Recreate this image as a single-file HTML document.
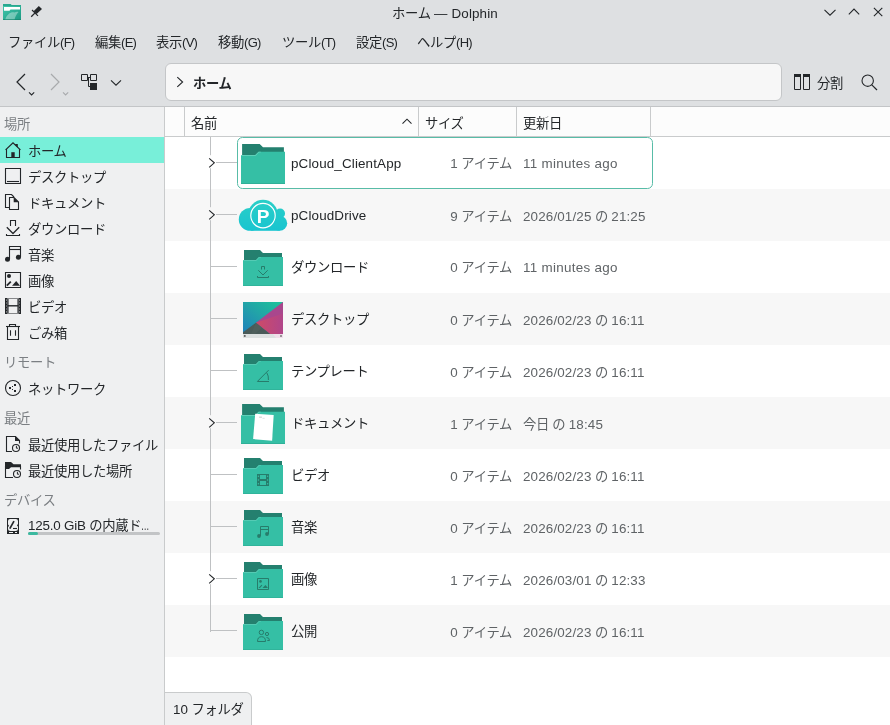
<!DOCTYPE html>
<html lang="ja">
<head>
<meta charset="utf-8">
<title>ホーム — Dolphin</title>
<style>
*{box-sizing:border-box;margin:0;padding:0}
html,body{width:890px;height:725px;overflow:hidden;background:#dee0e2}
body{position:relative;font-family:"Liberation Sans","Noto Sans CJK JP",sans-serif;font-size:13.33px;letter-spacing:-.33px;color:#232629;line-height:1}
.abs{position:absolute}
.l{font-size:13.4px;letter-spacing:.15px}
.m{letter-spacing:.3px}
.g{letter-spacing:-.2px}
.a{letter-spacing:-.7px;font-size:13px}
.el{display:inline-block;transform:scaleX(.62);transform-origin:0 50%}
.t{will-change:transform;position:absolute;white-space:nowrap;line-height:20px;height:20px;margin-top:2px}
svg{position:absolute;overflow:visible}
.gs{will-change:transform}
#titlebar{left:0;top:0;width:890px;height:27px;background:#dee0e2}
#title{left:0;width:890px;top:3px;text-align:center;margin-top:1px}
#menubar{left:0;top:27px;width:890px;height:31px}
#menubar .t{top:5px;margin-top:1px}
#toolbar{left:0;top:58px;width:890px;height:48px}
#tbsep{left:0;top:106px;width:890px;height:1px;background:#c3c5c7}
#loc{left:165px;top:63px;width:617px;height:38px;background:#f7f7f7;border:1px solid #c4c6c8;border-radius:6px}
#sidebar{left:0;top:107px;width:164px;height:618px;background:#eff0f1}
#sidediv{left:164px;top:107px;width:1px;height:618px;background:#c9cbcc}
#view{left:165px;top:107px;width:725px;height:618px;background:#fff}
.sh{left:4px;color:#7b7f83}
.si{left:28px}
#hl{left:0;top:137px;width:164px;height:26px;background:#78efd9}
#header{left:165px;top:107px;width:725px;height:30px;background:#fcfcfc;border-bottom:1px solid #c9cbcc}
.hd{top:107px;width:1px;height:29px;background:#c9cbcc}
.row{left:165px;width:725px;height:52px}
.alt{background:#f7f7f7}
.nm{left:291px;margin-top:1px}
.sz{margin-top:1px;left:400px;width:112px;text-align:right;color:#5f6366}
.dt{margin-top:1px;left:523px;color:#5f6366}
#status{left:165px;top:692px;width:87px;height:40px;background:#eff0f1;border:1px solid #c9cbcc;border-left:none;border-radius:0 6px 0 0}
</style>
</head>
<body>
<div id="titlebar" class="abs"></div>
<div id="title" class="t">ホーム <span class="l">— Dolphin</span></div>

<div id="menubar" class="abs">
<div class="t" style="left:8px">ファイル<span class="l a">(F)</span></div>
<div class="t" style="left:95px">編集<span class="l a">(E)</span></div>
<div class="t" style="left:156px">表示<span class="l a">(V)</span></div>
<div class="t" style="left:218px">移動<span class="l a">(G)</span></div>
<div class="t" style="left:282px">ツール<span class="l a">(T)</span></div>
<div class="t" style="left:356px">設定<span class="l a">(S)</span></div>
<div class="t" style="left:417px">ヘルプ<span class="l a">(H)</span></div>
</div>

<div id="toolbar" class="abs"></div>
<div id="loc" class="abs"></div>
<div class="t" style="left:193px;top:72px;font-weight:bold">ホーム</div>
<div class="t" style="left:817px;top:72px">分割</div>
<div id="tbsep" class="abs"></div>

<div id="sidebar" class="abs"></div>
<div id="sidediv" class="abs"></div>
<div id="hl" class="abs"></div>
<div class="t sh" style="top:113px">場所</div>
<div class="t si" style="top:140px">ホーム</div>
<div class="t si" style="top:166px">デスクトップ</div>
<div class="t si" style="top:192px">ドキュメント</div>
<div class="t si" style="top:218px">ダウンロード</div>
<div class="t si" style="top:244px">音楽</div>
<div class="t si" style="top:270px">画像</div>
<div class="t si" style="top:296px">ビデオ</div>
<div class="t si" style="top:322px">ごみ箱</div>
<div class="t sh" style="top:351px">リモート</div>
<div class="t si" style="top:378px">ネットワーク</div>
<div class="t sh" style="top:407px">最近</div>
<div class="t si" style="top:434px">最近使用したファイル</div>
<div class="t si" style="top:460px">最近使用した場所</div>
<div class="t sh" style="top:489px">デバイス</div>
<div class="t si" style="top:514px"><span class="l g">125.0 GiB</span> の内蔵ド<span class="l el">…</span></div>

<div id="view" class="abs"></div>
<div class="row abs" style="top:137px"></div>
<div class="row abs alt" style="top:189px"></div>
<div class="row abs" style="top:241px"></div>
<div class="row abs alt" style="top:293px"></div>
<div class="row abs" style="top:345px"></div>
<div class="row abs alt" style="top:397px"></div>
<div class="row abs" style="top:449px"></div>
<div class="row abs alt" style="top:501px"></div>
<div class="row abs" style="top:553px"></div>
<div class="row abs alt" style="top:605px"></div>

<div id="header" class="abs"></div>
<div class="hd abs" style="left:184px"></div>
<div class="hd abs" style="left:418px"></div>
<div class="hd abs" style="left:516px"></div>
<div class="hd abs" style="left:650px"></div>
<div class="t" style="left:191px;top:112px">名前</div>
<div class="t" style="left:425px;top:112px">サイズ</div>
<div class="t" style="left:523px;top:112px">更新日</div>

<div class="abs" style="left:237px;top:137px;width:416px;height:52px;border:1px solid #58bca7;border-radius:5.5px;background:#fff"></div>

<div class="t nm" style="top:153px"><span class="l">pCloud_ClientApp</span></div>
<div class="t nm" style="top:205px"><span class="l">pCloudDrive</span></div>
<div class="t nm" style="top:257px">ダウンロード</div>
<div class="t nm" style="top:309px">デスクトップ</div>
<div class="t nm" style="top:361px">テンプレート</div>
<div class="t nm" style="top:413px">ドキュメント</div>
<div class="t nm" style="top:465px">ビデオ</div>
<div class="t nm" style="top:517px">音楽</div>
<div class="t nm" style="top:569px">画像</div>
<div class="t nm" style="top:621px">公開</div>

<div class="t sz" style="top:153px"><span class="l">1</span> アイテム</div>
<div class="t sz" style="top:206px"><span class="l">9</span> アイテム</div>
<div class="t sz" style="top:257px"><span class="l">0</span> アイテム</div>
<div class="t sz" style="top:310px"><span class="l">0</span> アイテム</div>
<div class="t sz" style="top:362px"><span class="l">0</span> アイテム</div>
<div class="t sz" style="top:414px"><span class="l">1</span> アイテム</div>
<div class="t sz" style="top:466px"><span class="l">0</span> アイテム</div>
<div class="t sz" style="top:518px"><span class="l">0</span> アイテム</div>
<div class="t sz" style="top:570px"><span class="l">1</span> アイテム</div>
<div class="t sz" style="top:622px"><span class="l">0</span> アイテム</div>

<div class="t dt" style="top:153px"><span class="l m">11 minutes ago</span></div>
<div class="t dt" style="top:206px"><span class="l">2026/01/25</span> の <span class="l">21:25</span></div>
<div class="t dt" style="top:257px"><span class="l m">11 minutes ago</span></div>
<div class="t dt" style="top:310px"><span class="l">2026/02/23</span> の <span class="l">16:11</span></div>
<div class="t dt" style="top:362px"><span class="l">2026/02/23</span> の <span class="l">16:11</span></div>
<div class="t dt" style="top:414px">今日 の <span class="l">18:45</span></div>
<div class="t dt" style="top:466px"><span class="l">2026/02/23</span> の <span class="l">16:11</span></div>
<div class="t dt" style="top:518px"><span class="l">2026/02/23</span> の <span class="l">16:11</span></div>
<div class="t dt" style="top:570px"><span class="l">2026/03/01</span> の <span class="l">12:33</span></div>
<div class="t dt" style="top:622px"><span class="l">2026/02/23</span> の <span class="l">16:11</span></div>

<div class="abs" style="left:210px;top:137px;width:1px;height:495px;background:#bfc1c3"></div><div class="abs" style="left:216px;top:162px;width:21px;height:1px;background:#bfc1c3"></div><svg style="left:205px;top:155px" width="12" height="15" viewBox="0 0 12 15" ><rect x="4" y="0.2" width="3" height="13" fill="#fff"/><path d="M4.2 3.3 9.3 7.85 4.2 12.4" fill="none" stroke="#232629" stroke-width="1.1" /></svg><div class="abs" style="left:216px;top:214px;width:21px;height:1px;background:#bfc1c3"></div><svg style="left:205px;top:207px" width="12" height="15" viewBox="0 0 12 15" ><rect x="4" y="0.2" width="3" height="13" fill="#f7f7f7"/><path d="M4.2 3.3 9.3 7.85 4.2 12.4" fill="none" stroke="#232629" stroke-width="1.1" /></svg><div class="abs" style="left:211px;top:266px;width:26px;height:1px;background:#bfc1c3"></div><div class="abs" style="left:211px;top:318px;width:26px;height:1px;background:#bfc1c3"></div><div class="abs" style="left:211px;top:370px;width:26px;height:1px;background:#bfc1c3"></div><div class="abs" style="left:216px;top:422px;width:21px;height:1px;background:#bfc1c3"></div><svg style="left:205px;top:415px" width="12" height="15" viewBox="0 0 12 15" ><rect x="4" y="0.2" width="3" height="13" fill="#f7f7f7"/><path d="M4.2 3.3 9.3 7.85 4.2 12.4" fill="none" stroke="#232629" stroke-width="1.1" /></svg><div class="abs" style="left:211px;top:474px;width:26px;height:1px;background:#bfc1c3"></div><div class="abs" style="left:211px;top:526px;width:26px;height:1px;background:#bfc1c3"></div><div class="abs" style="left:216px;top:578px;width:21px;height:1px;background:#bfc1c3"></div><svg style="left:205px;top:571px" width="12" height="15" viewBox="0 0 12 15" ><rect x="4" y="0.2" width="3" height="13" fill="#fff"/><path d="M4.2 3.3 9.3 7.85 4.2 12.4" fill="none" stroke="#232629" stroke-width="1.1" /></svg><div class="abs" style="left:211px;top:630px;width:26px;height:1px;background:#bfc1c3"></div>
<svg style="left:241px;top:144px" width="44" height="40" viewBox="0 0 40 36" preserveAspectRatio="none"><g><path d="M1 0H17L20 3H39V12H1z" fill="#24806f" /><path d="M0 10H13L16 7H40V36H0z" fill="#35bfa5" /><path d="M0 35.2H40V36H0z" fill="#2fb098" /><path d="M0 10H13L16 7H18V7.6H16.3L13.3 10.7H0z" fill="#5fd0b9" /></g></svg><svg style="left:243px;top:250px" width="40" height="36" viewBox="0 0 40 36" preserveAspectRatio="none"><g><path d="M1 0H17L20 3H39V12H1z" fill="#24806f" /><path d="M0 10H13L16 7H40V36H0z" fill="#35bfa5" /><path d="M0 35.2H40V36H0z" fill="#2fb098" /><path d="M0 10H13L16 7H18V7.6H16.3L13.3 10.7H0z" fill="#5fd0b9" /><path d="M18.5 19.5V16.5H21.5V19.5" fill="none" stroke="#277c6b" stroke-width="1" /><path d="M15.3 20.3 20 25 24.7 20.3" fill="none" stroke="#277c6b" stroke-width="1" /><path d="M14.5 26V27.5H25.5V26" fill="none" stroke="#277c6b" stroke-width="1" /></g></svg><svg style="left:243px;top:354px" width="40" height="36" viewBox="0 0 40 36" preserveAspectRatio="none"><g><path d="M1 0H17L20 3H39V12H1z" fill="#24806f" /><path d="M0 10H13L16 7H40V36H0z" fill="#35bfa5" /><path d="M0 35.2H40V36H0z" fill="#2fb098" /><path d="M0 10H13L16 7H18V7.6H16.3L13.3 10.7H0z" fill="#5fd0b9" /><path d="M14.3 27.5H26" fill="none" stroke="#277c6b" stroke-width="1" /><path d="M14.5 27.3 25.6 16.2" fill="none" stroke="#277c6b" stroke-width="1" /><path d="M23.8 18.8Q25.8 21.8 25.4 26" fill="none" stroke="#277c6b" stroke-width="1" /></g></svg><svg style="left:241px;top:404px" width="44" height="40" viewBox="0 0 40 36" preserveAspectRatio="none"><g><path d="M1 0H17L20 3H39V12H1z" fill="#24806f" /><path d="M0 10H13L16 7H40V36H0z" fill="#35bfa5" /><path d="M0 35.2H40V36H0z" fill="#2fb098" /><path d="M0 10H13L16 7H18V7.6H16.3L13.3 10.7H0z" fill="#5fd0b9" /><path d="M12.9 8.7 29.7 9.8 28.3 33 11 31.6z" fill="#fff" /><path d="M16.5 11.2H19V12.6H16.5z" fill="#d9dcdc" /><path d="M19.5 12.4H21.5V13.4H19.5z" fill="#e4e6e6" /></g></svg><svg style="left:243px;top:458px" width="40" height="36" viewBox="0 0 40 36" preserveAspectRatio="none"><g><path d="M1 0H17L20 3H39V12H1z" fill="#24806f" /><path d="M0 10H13L16 7H40V36H0z" fill="#35bfa5" /><path d="M0 35.2H40V36H0z" fill="#2fb098" /><path d="M0 10H13L16 7H18V7.6H16.3L13.3 10.7H0z" fill="#5fd0b9" /><path d="M14 16H26V28H14z" fill="#277c6b" /><path d="M17 17H23V21H17zM17 23H23V27H17z" fill="#35bfa5" /><circle cx="15.4" cy="18.3" r=".7" fill="#35bfa5"/><circle cx="15.4" cy="22" r=".7" fill="#35bfa5"/><circle cx="15.4" cy="25.7" r=".7" fill="#35bfa5"/><circle cx="24.6" cy="18.3" r=".7" fill="#35bfa5"/><circle cx="24.6" cy="22" r=".7" fill="#35bfa5"/><circle cx="24.6" cy="25.7" r=".7" fill="#35bfa5"/></g></svg><svg style="left:243px;top:510px" width="40" height="36" viewBox="0 0 40 36" preserveAspectRatio="none"><g><path d="M1 0H17L20 3H39V12H1z" fill="#24806f" /><path d="M0 10H13L16 7H40V36H0z" fill="#35bfa5" /><path d="M0 35.2H40V36H0z" fill="#2fb098" /><path d="M0 10H13L16 7H18V7.6H16.3L13.3 10.7H0z" fill="#5fd0b9" /><path d="M17.5 26V16.5H25.5V24" fill="none" stroke="#277c6b" stroke-width="1" /><path d="M17.5 19.5H25.5" fill="none" stroke="#277c6b" stroke-width="1" /><circle cx="16" cy="26" r="1.9" fill="#277c6b"/><circle cx="24" cy="24" r="1.9" fill="#277c6b"/></g></svg><svg style="left:243px;top:562px" width="40" height="36" viewBox="0 0 40 36" preserveAspectRatio="none"><g><path d="M1 0H17L20 3H39V12H1z" fill="#24806f" /><path d="M0 10H13L16 7H40V36H0z" fill="#35bfa5" /><path d="M0 35.2H40V36H0z" fill="#2fb098" /><path d="M0 10H13L16 7H18V7.6H16.3L13.3 10.7H0z" fill="#5fd0b9" /><path d="M14.5 16.5H25.5V27.5H14.5z" fill="none" stroke="#277c6b" stroke-width="1" /><circle cx="17.5" cy="19.4" r="1.3" fill="#277c6b"/><path d="M15.5 26 18.5 22.8 19.3 23.6 17 26z" fill="#277c6b" /><path d="M19.5 26 22.5 23 25 26z" fill="#277c6b" /></g></svg><svg style="left:243px;top:614px" width="40" height="36" viewBox="0 0 40 36" preserveAspectRatio="none"><g><path d="M1 0H17L20 3H39V12H1z" fill="#24806f" /><path d="M0 10H13L16 7H40V36H0z" fill="#35bfa5" /><path d="M0 35.2H40V36H0z" fill="#2fb098" /><path d="M0 10H13L16 7H18V7.6H16.3L13.3 10.7H0z" fill="#5fd0b9" /><circle cx="18.4" cy="18.4" r="2.2" fill="none" stroke="#277c6b"/><path d="M14.5 27.5Q14.5 22.7 18.5 22.7T22.5 27.5z" fill="none" stroke="#277c6b" stroke-width="1" /><circle cx="24" cy="20" r="1.6" fill="none" stroke="#277c6b"/><path d="M23.5 23.5Q26.5 23.5 26.5 26.5H24.3" fill="none" stroke="#277c6b" stroke-width="1" /></g></svg><svg style="left:238px;top:199px" width="51" height="33" viewBox="-0.7 0 51 33" class="gs"><defs><linearGradient id="pcg" gradientUnits="userSpaceOnUse" x1="0" y1="0" x2="0" y2="33"><stop offset="0" stop-color="#2bcfc7"/><stop offset="1" stop-color="#18c4d0"/></linearGradient></defs><g fill="url(#pcg)"><circle cx="11.5" cy="20.4" r="11.4"/><circle cx="24.3" cy="15.6" r="14.8"/><circle cx="41.4" cy="14.4" r="4.9"/><circle cx="41" cy="24.3" r="7.5"/><rect x="12" y="20" width="29" height="11.8"/></g><circle cx="24.3" cy="16.6" r="12.2" fill="none" stroke="#fff" stroke-width="1.15"/><text x="24.3" y="23.6" text-anchor="middle" font-family="Liberation Sans,sans-serif" font-weight="bold" font-size="19" fill="#fff">P</text></svg><svg style="left:243px;top:302px" width="40" height="36" viewBox="0 0 40 36" ><defs><linearGradient id="dg1" x1="0" y1="1" x2="1" y2="0"><stop offset="0" stop-color="#1f7fbc"/><stop offset=".5" stop-color="#22a3a8"/><stop offset="1" stop-color="#1cc598"/></linearGradient><linearGradient id="dg2" x1="0" y1="0" x2="1" y2="0"><stop offset="0" stop-color="#cf4b66"/><stop offset="1" stop-color="#b0458a"/></linearGradient></defs><rect width="40" height="32" fill="url(#dg1)"/><path d="M40 0 12.9 20.8 27.1 32H40z" fill="#a9478d"/><path d="M12.9 20.8 40 11.5V32H27.1z" fill="url(#dg2)"/><path d="M0 30.3 12.9 20.8 27.1 32H0z" fill="#4a5b59"/><path d="M12.9 20.8 19 25.5 12 32H8z" fill="#53635f" opacity=".6"/><rect y="32" width="40" height="4" fill="#dde1e1"/><path d="M30 32H40V36H33z" fill="#f0dfea"/><rect x=".9" y="33.1" width="1.7" height="1.7" fill="#555"/><rect x="37.2" y="33.2" width="1.6" height="1.6" fill="#6a6a6a"/></svg>
<svg style="left:5px;top:142px" width="16" height="16" viewBox="0 0 16 16" ><path d="M.6 7.9 8 .9 15.4 7.9" fill="none" stroke="#232629" stroke-width="1.25" /><path d="M1.5 7V15.5H14.5V7" fill="none" stroke="#232629" stroke-width="1.1" /><path d="M6.3 10.2h3.4V15.5H6.3z" fill="#232629" /><path d="M10.2 3V2h2.6V5.5z" fill="#232629" /></svg><svg style="left:5px;top:168px" width="16" height="16" viewBox="0 0 16 16" ><path d="M.5.5h15v15H.5z" fill="none" stroke="#232629" stroke-width="1.1" /><path d="M2 13.5H14" fill="none" stroke="#232629" stroke-width="1.1" /></svg><svg style="left:5px;top:194px" width="16" height="16" viewBox="0 0 16 16" ><path d="M4 13.5H.5V.5H6.5L9 3" fill="none" stroke="#232629" stroke-width="1.1" /><path d="M4.5 3.5H9L13.5 8V15.5H4.5z" fill="none" stroke="#232629" stroke-width="1.1" /><path d="M8.7 3.2V8.3H13.8z" fill="#232629" /></svg><svg style="left:5px;top:220px" width="16" height="16" viewBox="0 0 16 16" ><path d="M5.5 6V.5H10.5V6" fill="none" stroke="#232629" stroke-width="1.1" /><path d="M1.8 7.3 8 13.5 14.2 7.3" fill="none" stroke="#232629" stroke-width="1.3" /><path d="M1.5 14V15.5H14.5V14" fill="none" stroke="#232629" stroke-width="1.1" /></svg><svg style="left:5px;top:246px" width="16" height="16" viewBox="0 0 16 16" ><path d="M4.5 13V.5H15.5V11" fill="none" stroke="#232629" stroke-width="1.1" /><path d="M4.5 3.5H15.5" fill="none" stroke="#232629" stroke-width="1.1" /><circle cx="2.5" cy="13.2" r="2.5" fill="#232629"/><circle cx="13.4" cy="11.3" r="2.5" fill="#232629"/></svg><svg style="left:5px;top:272px" width="16" height="16" viewBox="0 0 16 16" ><path d="M.5.5h15v15H.5z" fill="none" stroke="#232629" stroke-width="1.1" /><circle cx="4" cy="3.9" r="2" fill="#232629"/><path d="M1.8 13.6 5.8 9.6" fill="none" stroke="#232629" stroke-width="1.8" /><path d="M7 13.8 11.2 9 15 13.8z" fill="#232629" /></svg><svg style="left:5px;top:298px" width="16" height="16" viewBox="0 0 16 16" ><path d="M0 0H2.7V16H0zM13.3 0H16V16H13.3z" fill="#232629" /><path d="M2.5 .5H13.5M2.5 15.5H13.5" fill="none" stroke="#85878a" stroke-width="1" /><path d="M2.5 7.8H13.5" fill="none" stroke="#232629" stroke-width="1.4" /><path d="M3.2 1V15M12.8 1V15" fill="none" stroke="#232629" stroke-width="0.8" /><path d="M1 1.5h.9v1.2H1zM14.1 1.5h.9v1.2h-.9z" fill="#aeb0b2" /><path d="M1 4.4h.9v1.2H1zM14.1 4.4h.9v1.2h-.9z" fill="#aeb0b2" /><path d="M1 7.4h.9v1.2H1zM14.1 7.4h.9v1.2h-.9z" fill="#aeb0b2" /><path d="M1 10.4h.9v1.2H1zM14.1 10.4h.9v1.2h-.9z" fill="#aeb0b2" /><path d="M1 13.3h.9v1.2H1zM14.1 13.3h.9v1.2h-.9z" fill="#aeb0b2" /></svg><svg style="left:5px;top:324px" width="16" height="16" viewBox="0 0 16 16" ><path d="M1 2.5H15" fill="none" stroke="#232629" stroke-width="1.1" /><path d="M4.5 2.5V.5H10.5V2.5" fill="none" stroke="#232629" stroke-width="1.1" /><path d="M2.5 2.5V15.5H13.5V2.5" fill="none" stroke="#232629" stroke-width="1.1" /><path d="M5.5 6.2V11.8M10.5 6.2V11.8" fill="none" stroke="#232629" stroke-width="1.1" /></svg><svg style="left:5px;top:380px" width="16" height="16" viewBox="0 0 16 16" ><circle cx="8" cy="8" r="7.5" fill="none" stroke="#232629" stroke-width="1.1"/><path d="M4 7h2v2H4zM9 4h2v2H9zM9 10h2v2H9zM7 6h1v1H7zM7 9h1v1H7z" fill="#232629" /></svg><svg style="left:5px;top:436px" width="16" height="16" viewBox="0 0 16 16" ><path d="M7 15.5H1.5V.5H10.5L14.5 4.5V7.5" fill="none" stroke="#232629" stroke-width="1.1" /><path d="M10 .3V5H14.7z" fill="#232629" /><circle cx="11" cy="12" r="3.5" fill="none" stroke="#232629" stroke-width="1.1"/><path d="M11.4 9.8V12.2H13" fill="none" stroke="#232629" stroke-width="1" /></svg><svg style="left:5px;top:462px" width="16" height="16" viewBox="0 0 16 16" ><path d="M8 15.5H.5V4M15.5 7.5V4" fill="none" stroke="#232629" stroke-width="1.1" /><path d="M0 0H6L8.5 2.3H16V5.3H6L4 7H0z" fill="#232629" /><circle cx="12" cy="12" r="3.5" fill="none" stroke="#232629" stroke-width="1.1"/><path d="M12.4 9.8V12.2H14" fill="none" stroke="#232629" stroke-width="1" /></svg><svg style="left:7px;top:518px" width="12" height="16" viewBox="0 0 12 16" ><path d="M0 0H12V16H0z" fill="#232629" /><path d="M3 1H9Q11 1 11 3V6Q10 7 10 7.5Q11 8 11 9V10.5Q11 13 8.5 13H3.5Q1 13 1 10.5V9Q2 8 2 7.5Q1 7 1 6V3Q1 1 3 1z" fill="#eff0f1" /><path d="M2.8 10.6 7 3.2" fill="none" stroke="#232629" stroke-width="1.7" /><path d="M6 10.5H10" fill="none" stroke="#232629" stroke-width="1.1" /><path d="M2 14H6V15H2zM8 14H10V15H8z" fill="#eff0f1" /></svg>
<svg style="left:12px;top:70px" width="28" height="28" viewBox="0 0 28 28" ><path d="M13 4 5 12 13 20" fill="none" stroke="#232629" stroke-width="1.2" /><path d="M17 22.4 19.6 25 22.2 22.4" fill="none" stroke="#232629" stroke-width="1.1" /></svg><svg style="left:46px;top:70px" width="28" height="28" viewBox="0 0 28 28" ><path d="M5 4 13 12 5 20" fill="none" stroke="#a8aaac" stroke-width="1.2" /><path d="M17 22.4 19.6 25 22.2 22.4" fill="none" stroke="#a8aaac" stroke-width="1.1" /></svg><svg style="left:81px;top:74px" width="16" height="16" viewBox="0 0 16 16" ><path d="M.5.5h6v6h-6z" fill="none" stroke="#232629" stroke-width="1" /><path d="M9.5.5h6v6h-6z" fill="none" stroke="#232629" stroke-width="1" /><path d="M9 9h7v7H9z" fill="#232629" /><path d="M6.5 3.5H9.5M7.5 3.5V12.5H9" fill="none" stroke="#232629" stroke-width="1" /></svg><svg style="left:110px;top:78px" width="12" height="9" viewBox="0 0 12 9" ><path d="M1 2.3 6 7.2 11 2.3" fill="none" stroke="#232629" stroke-width="1.1" /></svg><svg style="left:174px;top:75px" width="12" height="14" viewBox="0 0 12 14" ><path d="M3.3 2.2 8.6 7 3.3 11.8" fill="none" stroke="#232629" stroke-width="1.1" /></svg><svg style="left:794px;top:74px" width="16" height="16" viewBox="0 0 16 16" ><path d="M.5.5h6v15h-6z" fill="none" stroke="#232629" stroke-width="1" /><path d="M9.5.5h6v15h-6z" fill="none" stroke="#232629" stroke-width="1" /><path d="M0 0h7v3H0zM9 0h7v3H9z" fill="#232629" /></svg><svg style="left:861px;top:74px" width="17" height="17" viewBox="0 0 17 17" ><circle cx="6.7" cy="6.7" r="5.7" fill="none" stroke="#232629" stroke-width="1.1"/><path d="M10.8 10.8 16 16" fill="none" stroke="#232629" stroke-width="1.2" /></svg><svg style="left:823px;top:6px" width="14" height="12" viewBox="0 0 14 12" ><path d="M1.5 3.9 7 9.2 12.5 3.9" fill="none" stroke="#232629" stroke-width="1.1" /></svg><svg style="left:847px;top:6px" width="14" height="12" viewBox="0 0 14 12" ><path d="M1.8 8.3 7 3.1 12.2 8.3" fill="none" stroke="#232629" stroke-width="1.1" /></svg><svg style="left:872px;top:6px" width="12" height="12" viewBox="0 0 12 12" ><path d="M1.9 1.8 10.3 10.1M10.3 1.8 1.9 10.1" fill="none" stroke="#232629" stroke-width="1.1" /></svg><svg style="left:30px;top:5px" width="14" height="14" viewBox="0 0 14 14" ><path d="M8.8 1.1 12 4 6.6 9.1 3.6 6.2z" fill="#232629" /><path d="M2 5 8 10.8" fill="none" stroke="#232629" stroke-width="1.1" /><path d="M4.8 8.1 1.2 11.8" fill="none" stroke="#232629" stroke-width="1.3" /></svg><svg style="left:3px;top:4px" width="18" height="16" viewBox="0 0 18 16" ><defs><linearGradient id="ag" x1="0" y1="0" x2="1" y2="1"><stop offset="0" stop-color="#43c9ad"/><stop offset="1" stop-color="#1d9a83"/></linearGradient></defs><path d="M0 0H7.5L8.5 1H18V16H0z" fill="url(#ag)"/><path d="M0 0H7.5L8.5 1H18V2H0z" fill="#2aa88f"/><path d="M1 3H17V5.4H7.5L6.5 6.7H1z" fill="#fff"/><path d="M2 16C4 10 8 7.5 11.5 8.5 13 7.5 14.5 7.6 15.5 8 13.5 10 12 13 11.5 16z" fill="#fff" opacity=".35"/><path d="M0 15.3H18V16H0z" fill="#17866f"/></svg><svg style="left:401px;top:117px" width="12" height="9" viewBox="0 0 12 9" ><path d="M1.5 6.6 6 2.2 10.5 6.6" fill="none" stroke="#232629" stroke-width="1.1" /></svg>
<div class="abs" style="left:28px;top:532px;width:132px;height:3px;background:#c2c4c6;border-radius:1.5px"></div><div class="abs" style="left:28px;top:532px;width:10px;height:3px;background:#3bb9a0;border-radius:1.5px"></div>
<div id="status" class="abs"></div>
<div class="t" style="left:173px;top:698px"><span class="l">10</span> フォルダ</div>
</body>
</html>
